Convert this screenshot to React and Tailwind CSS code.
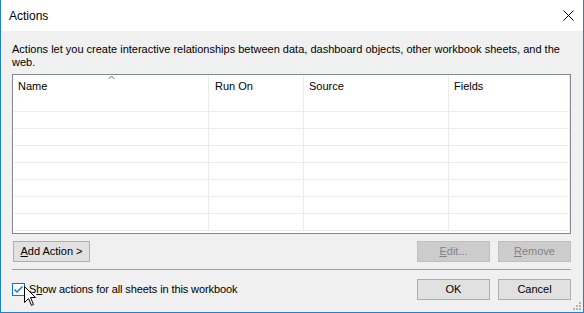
import React from 'react'

const COLS = [
  { label: 'Name', w: 'w-[196px]', pl: 'pl-[5px]' },
  { label: 'Run On', w: 'w-[95px]', pl: 'pl-[6px]' },
  { label: 'Source', w: 'w-[145px]', pl: 'pl-[5px]' },
  { label: 'Fields', w: 'w-[121px]', pl: 'pl-[5px]' },
]

const ROWS = [0, 1, 2, 3, 4, 5, 6, 7]

function Button({ children, disabled, className = '' }) {
  return (
    <button
      className={`h-[21px] flex items-center justify-center border leading-none ${
        disabled
          ? 'bg-[#cccccc] border-[#bfbfbf] text-[#838383]'
          : 'bg-[#e1e1e1] border-[#adadad] text-black'
      } ${className}`}
    >
      {children}
    </button>
  )
}

export default function App() {
  return (
    <div className="relative w-[584px] h-[313px] bg-[#f0f0f0] border-x border-b border-[#1883d7] flex flex-col font-['Liberation_Sans',Arial,sans-serif] text-[11px] text-black select-none">
      {/* Title bar */}
      <div className="h-[31px] bg-white flex items-center justify-between pl-[8px] pr-[9px] shrink-0">
        <span className="text-[12px]">Actions</span>
        <svg width="11" height="11" viewBox="0 0 11 11">
          <path d="M0.5 0.5 L10.5 10.5 M10.5 0.5 L0.5 10.5" stroke="#000" strokeWidth="1" fill="none" />
        </svg>
      </div>

      {/* Body */}
      <div className="flex-1 flex flex-col pl-[11px] pr-[12px]">
        <p className="mt-[12px] leading-[13px] whitespace-nowrap">
          Actions let you create interactive relationships between data, dashboard objects, other workbook sheets, and the
          <br />
          web.
        </p>

        {/* List */}
        <div className="mt-[5px] h-[160px] border border-[#828790] bg-white flex flex-col">
          <div className="flex h-[20px]">
            {COLS.map((c, i) => (
              <div key={c.label} className={`relative ${c.w} ${c.pl} border-r border-[#ececec] pt-[2px] leading-[18px]`}>
                {c.label}
                {i === 0 && (
                  <svg className="absolute left-[95px] top-0" width="8" height="5" viewBox="0 0 8 5">
                    <polyline points="0.5,4 3.5,1 6.5,4" stroke="#6d6d6d" strokeWidth="1" fill="none" />
                  </svg>
                )}
              </div>
            ))}
          </div>
          {ROWS.map(r => (
            <div key={r} className="flex h-[17px] border-b border-[#ececec]">
              {COLS.map(c => (
                <div key={c.label} className={`${c.w} border-r border-[#ececec]`} />
              ))}
            </div>
          ))}
        </div>

        {/* Action buttons */}
        <div className="mt-[7px] flex">
          <Button className="ml-[1px] w-[77px]">
            <span className="underline underline-offset-[1px]">A</span>dd Action &gt;
          </Button>
          <div className="flex-1" />
          <Button disabled className="w-[73px] mr-[8px]">
            <span className="underline underline-offset-[1px]">E</span>dit...
          </Button>
          <Button disabled className="w-[73px]">
            <span className="underline underline-offset-[1px]">R</span>emove
          </Button>
        </div>

        <div className="mt-[7px] h-px bg-[#a0a0a0]" />

        {/* Footer */}
        <div className="mt-[9px] flex items-center h-[21px]">
          <div className="w-[13px] h-[13px] border border-[#0078d7] bg-white flex items-center justify-center">
            <svg width="11" height="11" viewBox="0 0 11 11">
              <polyline points="1.5,5.5 4,8 9.5,2.5" stroke="#0078d7" strokeWidth="1.4" fill="none" />
            </svg>
          </div>
          <span className="ml-[4px] tracking-[-0.1px]">
            S<span className="underline underline-offset-[1px]">h</span>ow actions for all sheets in this workbook
          </span>
          <div className="flex-1" />
          <Button className="w-[73px] mr-[8px]">OK</Button>
          <Button className="w-[73px]">Cancel</Button>
        </div>
      </div>

      {/* Mouse cursor */}
      <svg className="absolute left-[23px] top-[286px]" width="13" height="21" viewBox="0 0 13 21">
        <path d="M0.5 0.5 L0.5 16.5 L4.5 12.5 L7.5 19.5 L9.5 18.5 L6.5 11.5 L11.5 11.5 Z" fill="#fff" stroke="#000" strokeWidth="1" strokeLinejoin="miter" />
      </svg>

      {/* Resize grip */}
      <svg className="absolute left-[572px] top-[302px]" width="8" height="8" viewBox="0 0 8 8">
        <rect x="6" y="0" width="2" height="2" fill="#b4b4b4" />
        <rect x="3" y="3" width="2" height="2" fill="#b4b4b4" />
        <rect x="6" y="3" width="2" height="2" fill="#b4b4b4" />
        <rect x="0" y="6" width="2" height="2" fill="#b4b4b4" />
        <rect x="3" y="6" width="2" height="2" fill="#b4b4b4" />
        <rect x="6" y="6" width="2" height="2" fill="#b4b4b4" />
      </svg>
    </div>
  )
}
